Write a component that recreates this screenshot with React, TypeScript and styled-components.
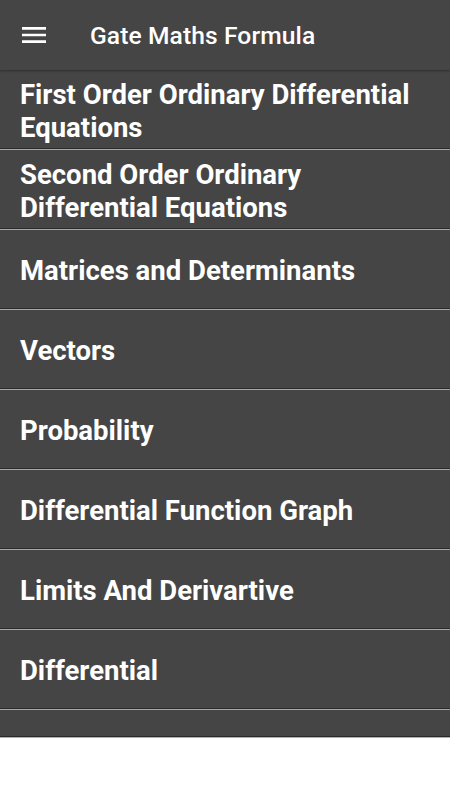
import React from "react";
import styled, { createGlobalStyle } from "styled-components";

const GlobalStyle = createGlobalStyle`
  html, body {
    margin: 0;
    padding: 0;
    background: #ffffff;
    font-family: Roboto, "Noto Sans", Arial, sans-serif;
  }
`;

const topics = [
  "First Order Ordinary Differential Equations",
  "Second Order Ordinary Differential Equations",
  "Matrices and Determinants",
  "Vectors",
  "Probability",
  "Differential Function Graph",
  "Limits And Derivartive",
  "Differential",
];

const App = () => {
  return (
    <Screen>
      <GlobalStyle />
      <AppBar>
        <MenuButton aria-label="menu">
          <svg width="32" height="32" viewBox="0 0 24 24" fill="#ffffff">
            <path d="M3 18h18v-2H3v2zm0-5h18v-2H3v2zm0-7v2h18V6H3z" />
          </svg>
        </MenuButton>
        <Title>Gate Maths Formula</Title>
      </AppBar>
      <TopicList>
        {topics.map((t) => (
          <TopicRow key={t}>
            <TopicText>{t}</TopicText>
          </TopicRow>
        ))}
      </TopicList>
    </Screen>
  );
};

const Screen = styled.div`
  width: 450px;
  height: 800px;
  background: #ffffff;
  overflow: hidden;
`;

const AppBar = styled.header`
  height: 70px;
  background: #454545;
  display: flex;
  align-items: center;
  box-shadow: 0 1px 2px rgba(0, 0, 0, 0.35);
  position: relative;
  z-index: 1;
`;

const MenuButton = styled.div`
  width: 32px;
  height: 32px;
  margin-left: 18px;
  display: flex;
`;

const Title = styled.h1`
  margin: 1px 0 0 40px;
  color: #ffffff;
  font-size: 24.6px;
  font-weight: 500;
  letter-spacing: 0.1px;
`;

const TopicList = styled.ul`
  margin: 0;
  padding: 0;
  list-style: none;
  height: 668px;
  box-sizing: border-box;
  background: #454545;
  border-bottom: 1px solid #b0b0b0;
  box-shadow: inset 0 -1px 0 #2a2a2a;
  overflow: hidden;
`;

const TopicRow = styled.li`
  height: 80px;
  box-sizing: border-box;
  padding: 0 20px;
  display: flex;
  align-items: center;
  border-bottom: 1px solid #a8a8a8;
  box-shadow: inset 0 -1px 0 #2a2a2a;
`;

const TopicText = styled.span`
  color: #ffffff;
  font-size: 27.5px;
  font-weight: 700;
  line-height: 33px;
  margin-top: 2px;
`;

export default App;
